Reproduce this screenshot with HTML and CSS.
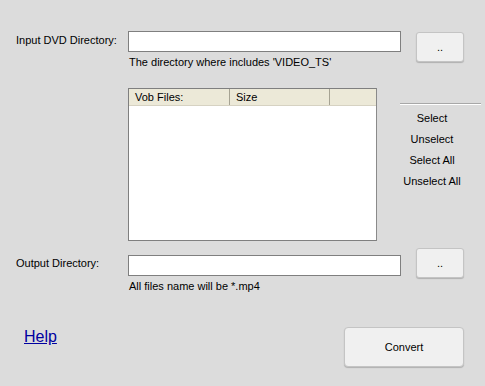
FILE: index.html
```html
<!DOCTYPE html>
<html lang="en">
<head>
  <meta charset="UTF-8" />
  <title>DVD to MP4</title>
  <link rel="stylesheet" href="styles.css">
</head>
<body>
  <div class="window">
    <div class="field-row top-row">
      <label class="field-label" for="dvdDir">Input DVD Directory:</label>
      <div class="field-body">
        <input type="text" id="dvdDir" class="path-input" />
        <div class="hint">The directory where includes 'VIDEO_TS'</div>
      </div>
      <button class="browse-btn">..</button>
    </div>

    <div class="list-row">
      <div class="listview">
        <div class="list-header">
          <div class="col col-name">Vob Files:</div>
          <div class="col col-size">Size</div>
          <div class="col col-rest"></div>
        </div>
      </div>
      <div class="select-panel">
        <div class="sep"></div>
        <div class="sel-links">
          <a class="sel-link">Select</a>
          <a class="sel-link">Unselect</a>
          <a class="sel-link">Select All</a>
          <a class="sel-link">Unselect All</a>
        </div>
      </div>
    </div>

    <div class="field-row out-row">
      <label class="field-label" for="outDir">Output Directory:</label>
      <div class="field-body">
        <input type="text" id="outDir" class="path-input" />
        <div class="hint">All files name will be *.mp4</div>
      </div>
      <button class="browse-btn">..</button>
    </div>

    <div class="bottom-row">
      <a href="#" class="help-link">Help</a>
      <button class="convert-btn">Convert</button>
    </div>
  </div>
</body>
</html>
```

FILE: styles.css
```css
body {
  margin: 0;
  background: #dcdcdc;
  font-family: 'Liberation Sans', Arial, sans-serif;
  font-size: 11px;
  color: #000;
}
.window {
  width: 485px;
  height: 386px;
  padding: 31px 0 0 16px;
  box-sizing: border-box;
}
.field-row {
  display: flex;
  align-items: flex-start;
}
.field-label {
  width: 112px;
  padding-top: 3px;
}
.field-body {
  width: 273px;
}
.path-input {
  display: block;
  width: 273px;
  height: 21px;
  margin: 0;
  box-sizing: border-box;
  border: 1px solid #7f7f7f;
  background: #fff;
}
.hint {
  margin-top: 4px;
  padding-left: 1px;
}
.browse-btn {
  width: 48px;
  height: 30px;
  margin: 1px 0 0 15px;
  border: 1px solid #c4c4c4;
  border-radius: 3px;
  background: #f0f0f0;
  box-shadow: 0 1px 1px #b0b0b0;
  font-family: inherit;
  font-size: 11px;
  padding: 0;
}
.list-row {
  display: flex;
  margin: 20px 0 0 112px;
}
.listview {
  width: 249px;
  height: 153px;
  box-sizing: border-box;
  border: 1px solid #7f7f7f;
  border-right-color: #8a8a8a;
  background: #fff;
}
.list-header {
  display: flex;
  height: 16px;
  background: #ece9d8;
  border-bottom: 1px solid #d6d2c2;
}
.col {
  box-sizing: border-box;
  border-right: 1px solid #a6a393;
  padding: 1px 0 0 6px;
  line-height: 14px;
}
.col-name { width: 101px; }
.col-size { width: 100px; }
.col-rest { width: 45px; border-right: none; }
.select-panel {
  width: 81px;
  margin-left: 23px;
  padding-top: 15px;
}
.sep {
  width: 81px;
  height: 1px;
  background: #a8a8a8;
  border-bottom: 1px solid #fff;
  margin-bottom: 3px;
}
.sel-links {
  display: flex;
  flex-direction: column;
  align-items: center;
  width: 64px;
}
.sel-link {
  display: block;
  line-height: 21px;
  white-space: nowrap;
  cursor: pointer;
}
.out-row {
  margin-top: 14px;
}
.out-row .field-label {
  padding-top: 2px;
}
.out-row .browse-btn {
  margin-top: -7px;
}
.bottom-row {
  display: flex;
  justify-content: space-between;
  align-items: flex-start;
  width: 440px;
  margin: 35px 0 0 8px;
}
.help-link {
  margin-top: 1px;
  font-size: 16px;
  color: #0000a0;
}
.convert-btn {
  width: 120px;
  height: 40px;
  border: 1px solid #c4c4c4;
  border-radius: 4px;
  background: #f0f0f0;
  box-shadow: 0 1px 1px #b0b0b0;
  font-family: inherit;
  font-size: 11px;
}
```
